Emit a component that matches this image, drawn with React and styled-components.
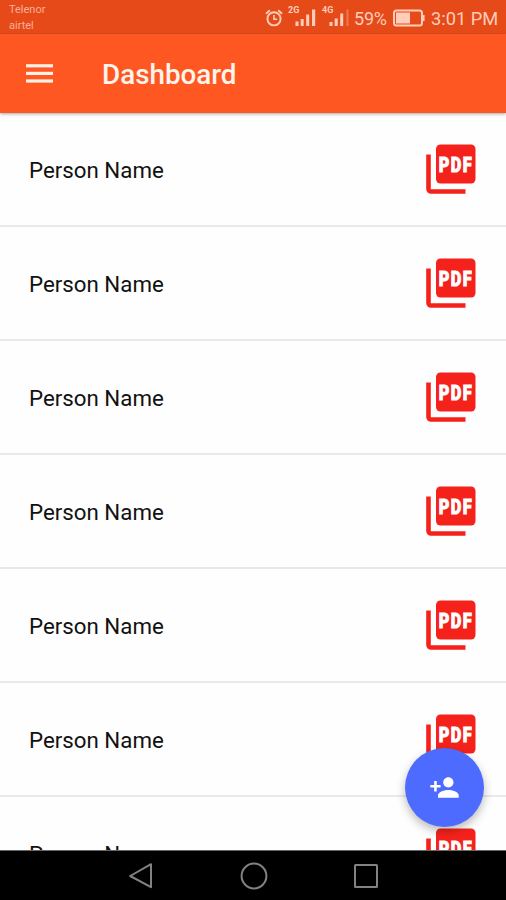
import React from "react";
import styled, { createGlobalStyle } from "styled-components";

const people = Array.from({ length: 7 }, (_, index) => ({
  id: index,
  name: "Person Name",
}));

const AlarmIcon = () => (
  <svg width="18" height="18" viewBox="0 0 18 18" fill="none" stroke="currentColor">
    <circle cx="9" cy="9.8" r="6.6" strokeWidth="1.9" />
    <path d="M1 4.7 4.8 1.3M17 4.7 13.2 1.3" strokeWidth="1.9" />
    <path d="M9 6v4.3h3.2" strokeWidth="1.6" />
  </svg>
);

const SignalIcon = ({ weak }) => (
  <svg width="21" height="18" viewBox="0 0 21 18" fill="currentColor">
    <rect x="0.5" y={weak ? 13 : 12.5} width="3" height={weak ? 4 : 4.5} />
    <rect x="5.7" y={weak ? 9.5 : 10} width="3" height={weak ? 7.5 : 7} />
    <rect x="11.2" y={weak ? 4.5 : 5.5} width="3" height={weak ? 12.5 : 11.5} />
    <rect
      x={weak ? 17.5 : 17}
      y="0.5"
      width={weak ? 2 : 3.2}
      height="16.5"
      opacity={weak ? 0.35 : 1}
    />
  </svg>
);

const BatteryIcon = () => (
  <svg width="32" height="18" viewBox="0 0 32 18" fill="none">
    <rect x="1" y="1.5" width="28" height="15" rx="2.5" stroke="currentColor" strokeWidth="2" />
    <rect x="3" y="3.5" width="14" height="11" fill="currentColor" />
    <path d="M30.7 6v6" stroke="currentColor" strokeWidth="1.8" />
  </svg>
);

const MenuIcon = () => (
  <svg width="27" height="20" viewBox="0 0 27 20" fill="currentColor">
    <rect width="27" height="3.2" y="0.2" />
    <rect width="27" height="3.2" y="7.8" />
    <rect width="27" height="3.2" y="15.4" />
  </svg>
);

const PdfIcon = () => (
  <svg width="50" height="50" viewBox="0 0 50 50">
    <rect x="10" y="0.5" width="39.5" height="39" rx="4.5" fill="#f5221b" />
    <path d="M2.5 10.5V45a2.5 2.5 0 0 0 2.5 2.5h34.5" fill="none" stroke="#f5221b" strokeWidth="4.6" />
    <PdfText transform="translate(12.8 28.2) scale(0.82 1)">PDF</PdfText>
  </svg>
);

const PersonAddIcon = () => (
  <svg width="31" height="31" viewBox="0 0 24 24" fill="#fff">
    <path d="M15 12c2.21 0 4-1.79 4-4s-1.79-4-4-4-4 1.79-4 4 1.79 4 4 4zm-9-2V7H4v3H1v2h3v3h2v-3h3v-2H6zm9 4c-2.67 0-8 1.34-8 4v2h16v-2c0-2.66-5.33-4-8-4z" />
  </svg>
);

const BackIcon = () => (
  <svg width="26" height="28" viewBox="0 0 26 28">
    <path d="M23 2.2v23L2.2 14z" />
  </svg>
);

const HomeIcon = () => (
  <svg width="28" height="28" viewBox="0 0 28 28">
    <circle cx="14" cy="14" r="12.4" />
  </svg>
);

const RecentIcon = () => (
  <svg width="26" height="26" viewBox="0 0 26 26">
    <rect x="2" y="2" width="22" height="22" rx="0.5" />
  </svg>
);

const App = () => {
  return (
    <Screen>
      <GlobalStyle />
      <StatusBar>
        <Carriers>
          <span>Telenor</span>
          <span>airtel</span>
        </Carriers>
        <StatusIcons>
          <AlarmIcon />
          <Signal $left={12}>
            <Network>2G</Network>
            <SignalIcon />
          </Signal>
          <Signal $left={13}>
            <Network>4G</Network>
            <SignalIcon weak />
          </Signal>
          <Percent>59%</Percent>
          <BatteryIcon />
          <Time>3:01 PM</Time>
        </StatusIcons>
      </StatusBar>
      <AppBar>
        <MenuButton aria-label="menu">
          <MenuIcon />
        </MenuButton>
        <Title>Dashboard</Title>
      </AppBar>
      <List>
        {people.map((person) => (
          <Row key={person.id}>
            <Name>{person.name}</Name>
            <PdfIcon />
          </Row>
        ))}
      </List>
      <AddButton aria-label="add person">
        <PersonAddIcon />
      </AddButton>
      <NavBar>
        <BackIcon />
        <HomeIcon />
        <RecentIcon />
      </NavBar>
    </Screen>
  );
};

export default App;

const GlobalStyle = createGlobalStyle`
  * {
    box-sizing: border-box;
  }

  body {
    margin: 0;
    font-family: Roboto, "Liberation Sans", sans-serif;
  }

  svg {
    display: block;
    flex-shrink: 0;
  }
`;

const Screen = styled.div`
  position: relative;
  display: flex;
  flex-direction: column;
  width: 506px;
  height: 900px;
  overflow: hidden;
  background-color: #fefefe;
`;

const StatusBar = styled.header`
  display: flex;
  justify-content: space-between;
  flex-shrink: 0;
  height: 34px;
  padding: 0 7px 0 9px;
  background-color: #e64a19;
  color: #ffcdb9;
`;

const Carriers = styled.div`
  display: flex;
  flex-direction: column;
  padding-top: 2px;
  font-size: 11px;
  line-height: 16px;
  color: #f9b096;
`;

const StatusIcons = styled.div`
  display: flex;
  align-items: center;
  height: 36px;
  font-size: 18px;
`;

const Signal = styled.div`
  position: relative;
  margin-left: ${({ $left }) => $left}px;
`;

const Network = styled.span`
  position: absolute;
  top: -4px;
  left: -7px;
  font-size: 9px;
  font-weight: 700;
  line-height: 10px;
`;

const Percent = styled.span`
  margin: 0 6px 0 4px;
  width: 33px;
  letter-spacing: -0.2px;
`;

const Time = styled.span`
  width: 68px;
  margin-left: 6px;
  font-size: 18.3px;
  white-space: nowrap;
`;

const AppBar = styled.div`
  position: relative;
  display: flex;
  align-items: center;
  flex-shrink: 0;
  height: 79px;
  padding-left: 26px;
  background-color: #ff5722;
  box-shadow: 0 1px 3px rgba(0, 0, 0, 0.35);
`;

const MenuButton = styled.button`
  padding: 0;
  background: none;
  border: none;
  color: #fff0e8;
`;

const Title = styled.h1`
  margin: 2px 0 0 49px;
  font-size: 27.8px;
  font-weight: 500;
  color: #fff4ec;
`;

const List = styled.main`
  flex: 1;
  min-height: 0;
  overflow: hidden;
`;

const Row = styled.div`
  display: flex;
  align-items: center;
  justify-content: space-between;
  height: 113.95px;
  padding: 1px 30px 0 29px;
  border-bottom: 2px solid #e9e9e9;
`;

const Name = styled.span`
  padding-top: 1px;
  font-size: 22.3px;
  color: #111;
`;

const PdfText = styled.text`
  font-family: Roboto, "Liberation Sans", sans-serif;
  font-size: 20px;
  font-weight: 900;
  letter-spacing: 1.6px;
  fill: #fff;
  stroke: #fff;
  stroke-width: 0.9px;
`;

const AddButton = styled.button`
  position: absolute;
  right: 22px;
  bottom: 73px;
  display: flex;
  align-items: center;
  justify-content: center;
  width: 79px;
  height: 79px;
  padding: 0;
  background-color: #4d6bfe;
  border: none;
  border-radius: 50%;
  box-shadow: 0 4px 10px rgba(0, 0, 0, 0.28);
`;

const NavBar = styled.nav`
  position: relative;
  display: flex;
  align-items: center;
  justify-content: space-between;
  flex-shrink: 0;
  height: 50px;
  padding: 0 127px 0 128px;
  border-top: 1px solid #666;
  background-color: #000;

  svg {
    fill: none;
    stroke: #828282;
    stroke-width: 2;
    stroke-linejoin: round;
  }
`;
